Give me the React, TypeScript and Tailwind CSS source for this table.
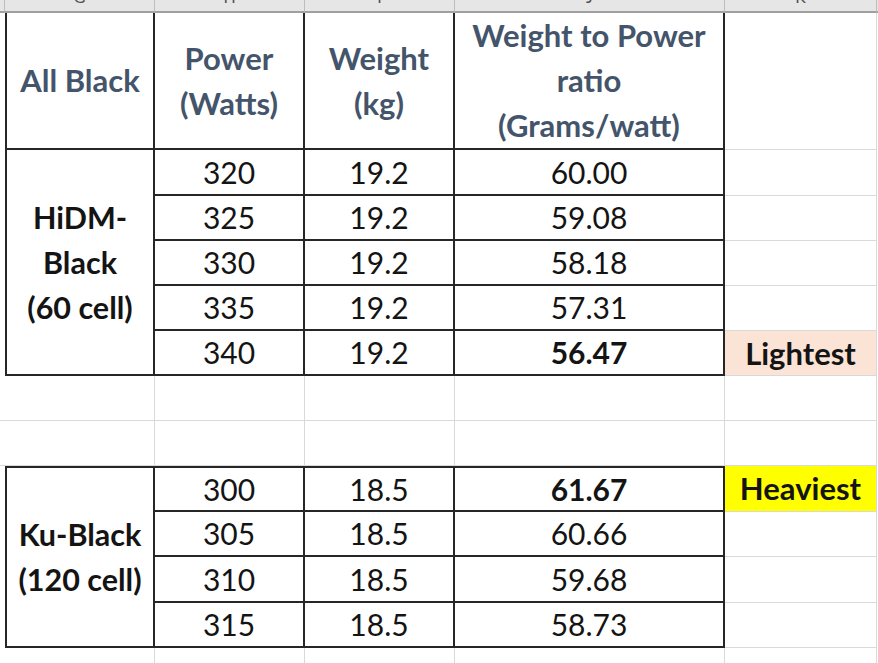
import React from "react";

const FONT = { fontFamily: "Lato, 'Open Sans', 'Liberation Sans', sans-serif" };

const tb = "border-[#262626]";
const grid = "border-[#d9d9d9]";

function HeadLetter({ l, last }: { l: string; last?: boolean }) {
  return (
    <div
      className={`bg-[#e6e6e6] border-b-2 border-b-[#a0a0a0] ${last ? "border-r border-r-[#c6c6c6]" : "border-r border-r-[#bdbdbd]"} overflow-hidden flex justify-center`}
    >
      <span className="text-[16px] leading-[16px] mt-[-11px] text-[#505050]" style={{ fontFamily: "Lato, sans-serif" }}>
        {l}
      </span>
    </div>
  );
}

function Num({ v, bold, top }: { v: string; bold?: boolean; top?: boolean }) {
  return (
    <div
      className={`border-r-2 border-b-2 ${top ? "border-t-2" : ""} ${tb} flex items-center justify-center text-[30px] text-[#141414] ${bold ? "font-bold" : ""}`}
    >
      {v}
    </div>
  );
}

function KCell({ children, bg }: { children?: React.ReactNode; bg?: string }) {
  return (
    <div
      className={`border-r border-b ${grid} flex items-center justify-center text-[31px] font-bold text-[#141414] ${bg ?? ""}`}
    >
      {children}
    </div>
  );
}

function Blank({ edge }: { edge?: boolean }) {
  return <div className={`${edge ? "" : "border-r"} border-b ${grid}`} />;
}

const headCls = `border-r-2 border-b-2 ${tb} flex items-center justify-center text-center text-[31px] font-bold text-[#44546a] leading-[45px]`;
const groupCls = `border-l-2 border-r-2 border-b-2 ${tb} flex items-center justify-center text-center text-[30.5px] font-bold text-[#141414] leading-[45px]`;

export default function App() {
  const t1 = [
    ["320", "19.2", "60.00"],
    ["325", "19.2", "59.08"],
    ["330", "19.2", "58.18"],
    ["335", "19.2", "57.31"],
    ["340", "19.2", "56.47"],
  ];
  const t2 = [
    ["300", "18.5", "61.67"],
    ["305", "18.5", "60.66"],
    ["310", "18.5", "59.68"],
    ["315", "18.5", "58.73"],
  ];
  return (
    <div
      className="w-[878px] h-[663px] overflow-hidden bg-white grid grid-cols-[5px_150px_150px_150px_270px_152px_1fr] grid-rows-[13px_137px_46px_45px_45px_45px_45px_45px_45px_46px_45px_46px_45px_15px]"
      style={FONT}
    >
      {/* column header strip */}
      <div className="bg-[#e6e6e6] border-b-2 border-b-[#a0a0a0] border-r border-r-[#bdbdbd]" />
      <HeadLetter l="G" />
      <HeadLetter l="H" />
      <HeadLetter l="I" />
      <HeadLetter l="J" />
      <HeadLetter l="K" />
      <div className="bg-[#e6e6e6] border-b-2 border-b-[#a0a0a0]" />

      {/* header row */}
      <div />
      <div className={`border-l-2 ${headCls}`}>All Black</div>
      <div className={headCls}>
        Power
        <br />
        (Watts)
      </div>
      <div className={headCls}>
        Weight
        <br />
        (kg)
      </div>
      <div className={headCls}>
        Weight to Power
        <br />
        ratio
        <br />
        (Grams/watt)
      </div>
      <KCell />
      <div />

      {/* table 1 */}
      {t1.map((r, i) => (
        <React.Fragment key={"a" + i}>
          <div />
          {i === 0 && (
            <div className={`row-span-5 ${groupCls}`}>
              HiDM-
              <br />
              Black
              <br />
              (60 cell)
            </div>
          )}
          <Num v={r[0]} />
          <Num v={r[1]} />
          <Num v={r[2]} bold={i === 4} />
          {i === 4 ? <KCell bg="bg-[#fbe3d6]">Lightest</KCell> : <KCell />}
          <div />
        </React.Fragment>
      ))}

      {/* blank rows */}
      {[0, 1].map((i) => (
        <React.Fragment key={"b" + i}>
          <Blank edge />
          <Blank />
          <Blank />
          <Blank />
          <Blank />
          <Blank />
          <div />
        </React.Fragment>
      ))}

      {/* table 2 */}
      {t2.map((r, i) => (
        <React.Fragment key={"c" + i}>
          <div />
          {i === 0 && (
            <div className={`row-span-4 border-t-2 ${groupCls}`}>
              Ku-Black
              <br />
              (120 cell)
            </div>
          )}
          <Num v={r[0]} top={i === 0} />
          <Num v={r[1]} top={i === 0} />
          <Num v={r[2]} bold={i === 0} top={i === 0} />
          {i === 0 ? <KCell bg="bg-[#ffff00]">Heaviest</KCell> : <KCell />}
          <div />
        </React.Fragment>
      ))}

      {/* last partial row */}
      <div />
      <div className={`border-r ${grid}`} />
      <div className={`border-r ${grid}`} />
      <div className={`border-r ${grid}`} />
      <div className={`border-r ${grid}`} />
      <div className={`border-r ${grid}`} />
      <div />
    </div>
  );
}
